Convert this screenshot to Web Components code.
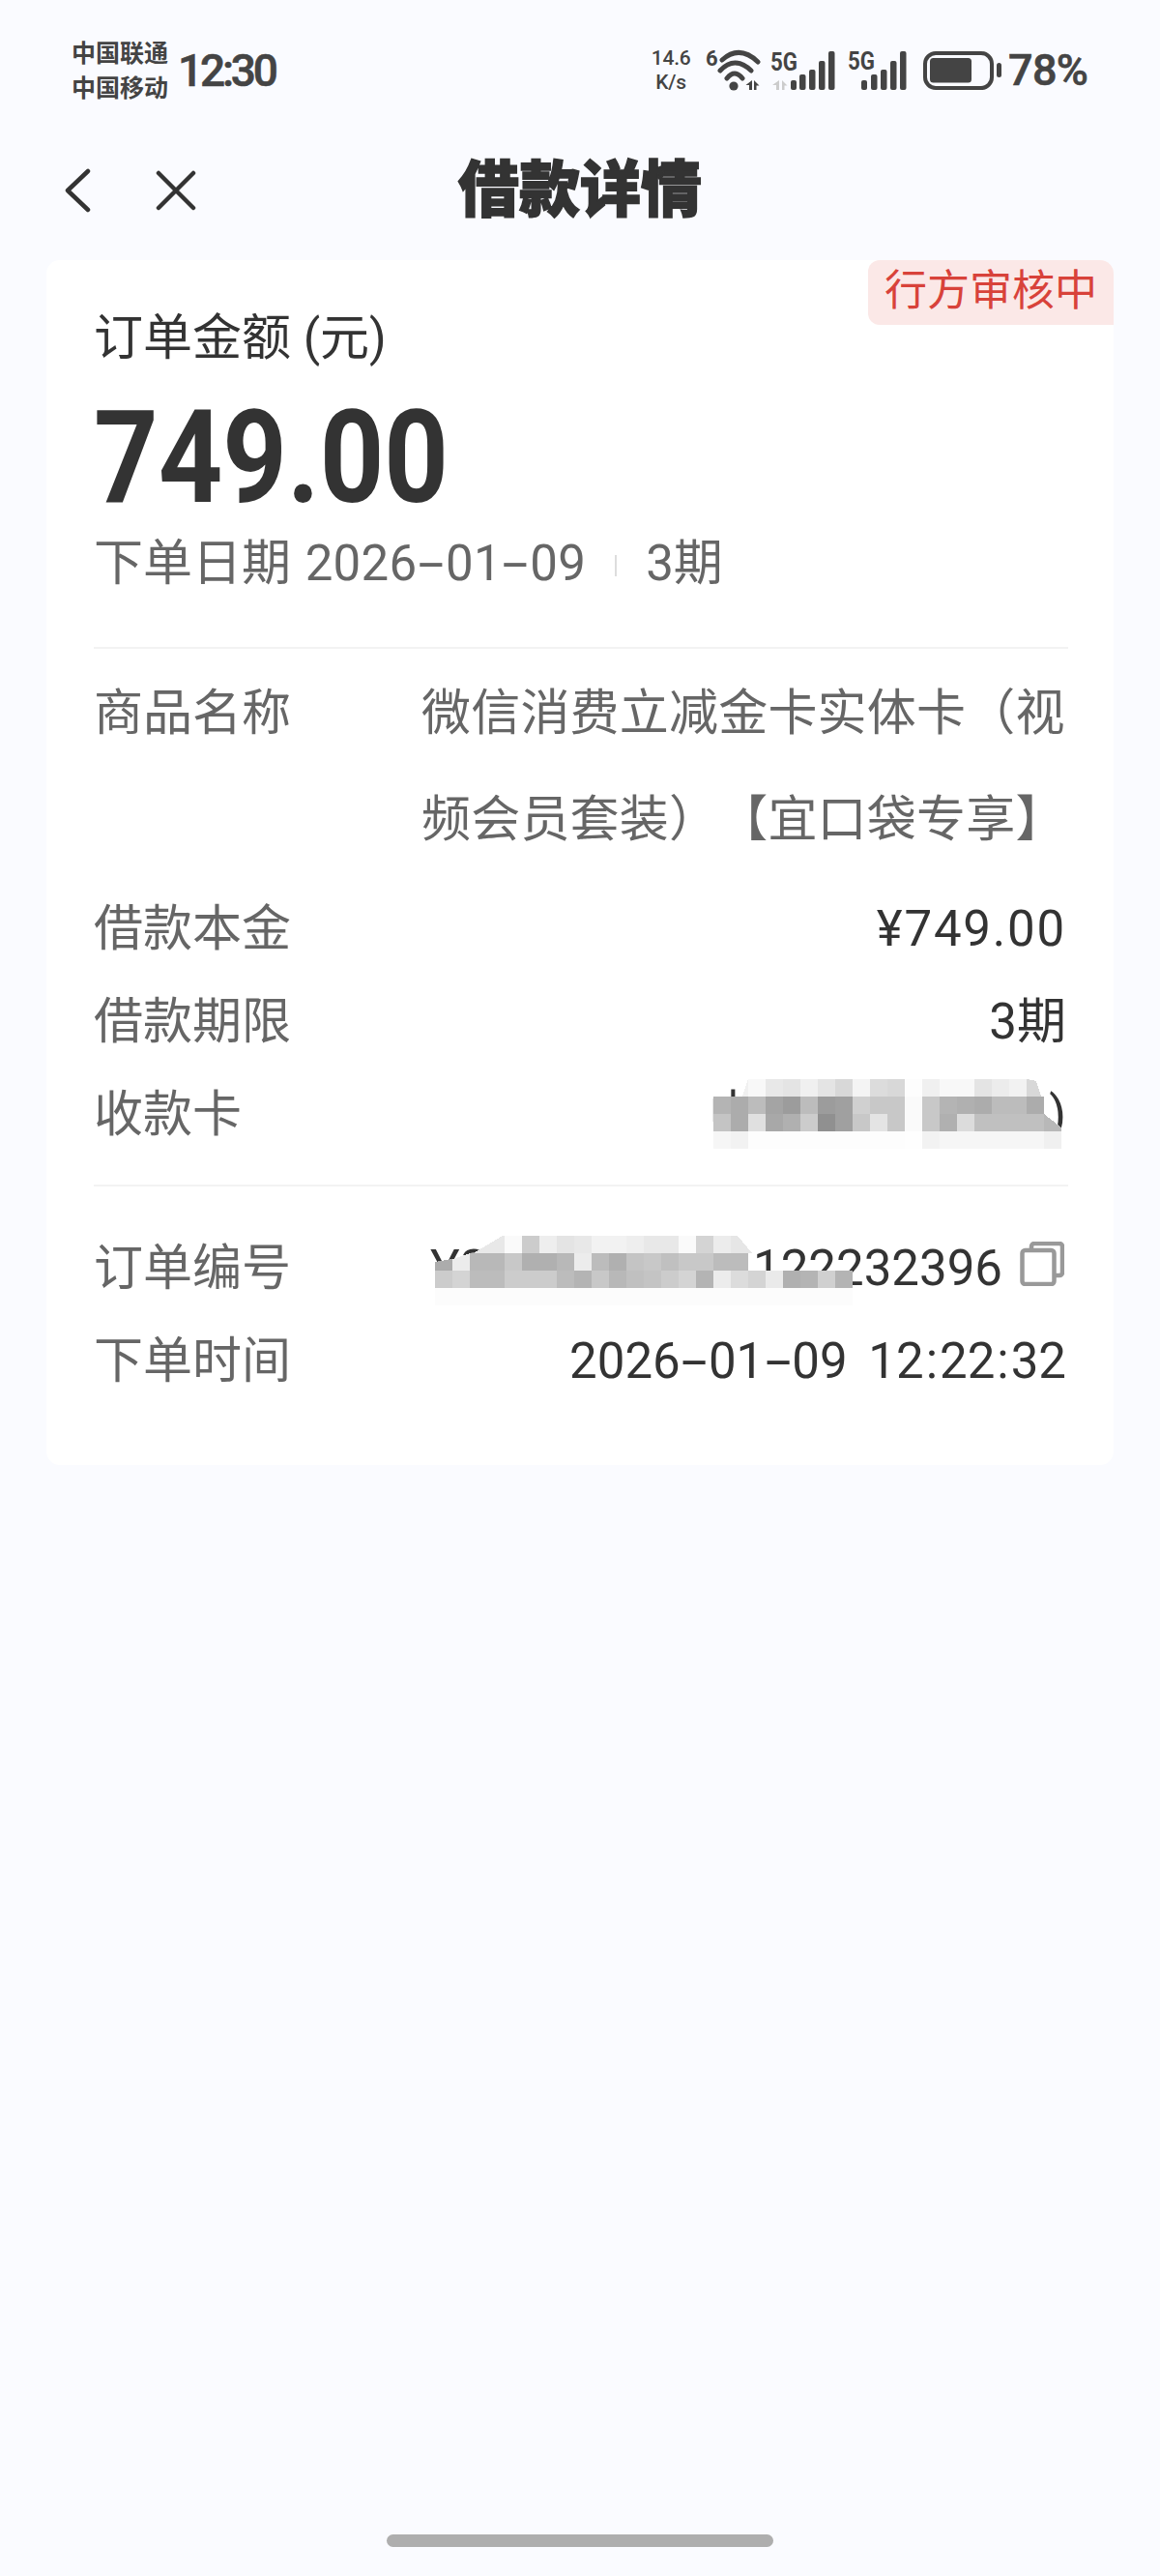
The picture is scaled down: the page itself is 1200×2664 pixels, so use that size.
<!DOCTYPE html>
<html lang="zh-CN">
<head>
<meta charset="utf-8">
<title>借款详情</title>
<style>
html,body{margin:0;padding:0;background:#fafbff;}
body{width:1200px;height:2664px;font-family:Roboto,"Noto Sans CJK SC",sans-serif;color:#333;}
x-app{display:block;}
</style>
</head>
<body>
<x-app></x-app>
<script>
const FONT='Roboto,"Noto Sans CJK SC",sans-serif';

class XStatusBar extends HTMLElement{
  constructor(){super();this.attachShadow({mode:'open'}).innerHTML=`
<style>
:host{display:flex;align-items:center;height:146px;padding:0 75px 0 74px;box-sizing:border-box;color:#444;font-family:${FONT};}
.car{display:flex;flex-direction:column;gap:11px;font-size:25px;line-height:25px;font-weight:700;width:100px;}
.time{margin-left:10px;font-size:46px;font-weight:500;letter-spacing:-3.2px;line-height:50px;-webkit-text-stroke:.6px #444;}
.right{margin-left:auto;display:flex;align-items:center;}
.sp{width:44px;font-size:21px;line-height:24.6px;font-weight:500;text-align:center;letter-spacing:-.2px;}
svg{display:block;margin-left:13px;}
svg text{font-family:${FONT};fill:#444;font-weight:700;}
.pct{margin-left:4px;font-size:45px;line-height:50px;font-weight:500;letter-spacing:-.8px;-webkit-text-stroke:.6px #444;}
</style>
<div class="car"><span>中国联通</span><span>中国移动</span></div>
<div class="time">12:30</div>
<div class="right">
  <div class="sp">14.6<br>K/s</div>
  <svg width="310" height="50" viewBox="730 48 310 50" fill="#444">
    <text x="731" y="68" font-size="22">6</text>
    <g fill="none" stroke="#444" stroke-width="5" stroke-linecap="round">
      <path d="M748 62Q766 46 785 64"/><path d="M746 73Q761 57 778 73"/><path d="M753 81Q761 71 769 81"/>
    </g>
    <circle cx="760" cy="89" r="4.6"/>
    <path d="M779 83v10h-3v-5h-3.500zM781 83l5.500 5.500h-3V93h-2.500z"/>
    <text x="798" y="72.500" font-size="26" textLength="28" lengthAdjust="spacingAndGlyphs">5G</text>
    <path d="M807 83v10h-3v-5h-4zM810 83l5.500 5.500h-3V93h-2.500z" fill="#ccc"/>
    <g>
      <rect x="819" y="83" width="6" height="10" rx="2"/><rect x="828" y="77" width="6.500" height="16" rx="2"/><rect x="838" y="72" width="6.500" height="21" rx="2"/><rect x="848" y="63" width="6.500" height="30" rx="2"/><rect x="858" y="53" width="6.500" height="40" rx="2"/>
    </g>
    <text x="878" y="71.500" font-size="25" textLength="28" lengthAdjust="spacingAndGlyphs">5G</text>
    <g>
      <rect x="892" y="83" width="6" height="10" rx="2"/><rect x="902" y="77" width="6.500" height="16" rx="2"/><rect x="912" y="72" width="6.500" height="21" rx="2"/><rect x="922" y="63" width="6.500" height="30" rx="2"/><rect x="932" y="53" width="6.500" height="40" rx="2"/>
    </g>
    <rect x="958" y="55" width="69" height="36" rx="11" fill="none" stroke="#444" stroke-width="4"/>
    <rect x="963" y="60" width="43" height="25.500" rx="3.500"/>
    <rect x="1032" y="65" width="5" height="15" rx="2.500"/>
  </svg>
  <div class="pct">78%</div>
</div>`;}
}

class XNavBar extends HTMLElement{
  constructor(){super();this.attachShadow({mode:'open'}).innerHTML=`
<style>
:host{display:grid;grid-template-columns:1fr auto 1fr;align-items:center;height:102px;margin-bottom:21px;box-sizing:border-box;color:#333;font-family:${FONT};}
.l{display:flex;align-items:center;gap:67px;padding-left:66px;}
svg{display:block;}
h1{margin:0;font-size:63px;line-height:80px;font-weight:900;letter-spacing:0;-webkit-text-stroke:1.500px #333;}
</style>
<div class="l">
<svg width="28" height="46" viewBox="0 0 28 46" fill="none" stroke="#333" stroke-width="4.500" stroke-linecap="round" stroke-linejoin="round"><path d="M25 3L4 23l21 20"/></svg>
<svg width="42" height="42" viewBox="0 0 42 42" fill="none" stroke="#333" stroke-width="4.500" stroke-linecap="round"><path d="M3 3l36 36M39 3L3 39"/></svg>
</div>
<h1>借款详情</h1>
<div></div>`;}
}

class XInfoRow extends HTMLElement{
  constructor(){super();this.attachShadow({mode:'open'}).innerHTML=`
<style>
:host{display:flex;position:relative;justify-content:space-between;font-size:51px;line-height:96px;color:#333;}
.l{color:#666;flex:none;white-space:nowrap;}
.v{display:flex;text-align:right;justify-content:flex-end;align-items:center;}
:host([long]){line-height:110px;}
:host([long]) .v{width:670px;flex:none;text-align:left;display:block;color:#666;margin-right:-1px;text-spacing-trim:space-all;letter-spacing:.2px;}
</style>
<div class="l"><slot name="label"></slot></div>
<div class="v"><slot></slot></div>`;}
}

class XMosaic extends HTMLElement{
  connectedCallback(){
    const s=18,rows=this.getAttribute('rows').trim().split('/').map(r=>r.trim().split(/\s+/));
    const w=Math.max(...rows.map(r=>r.length))*s,h=rows.length*s;
    let o='';
    rows.forEach((r,y)=>r.forEach((c,x)=>{if(c!=='--')o+=`<rect x="${x*s}" y="${y*s}" width="${s}" height="${s}" fill="#${c}${c}${c}"/>`;}));
    (this.getAttribute('polys')||'').split(';').filter(Boolean).forEach(p=>{const[a,c]=p.split('|');o+=`<polygon points="${a}" fill="#${c}${c}${c}"/>`;});
    this.attachShadow({mode:'open'}).innerHTML=`<style>:host{display:block;position:absolute;left:var(--x);top:var(--y);width:${w}px;height:${h}px;}svg{display:block;}</style><svg width="${w}" height="${h}" viewBox="0 0 ${w} ${h}" shape-rendering="crispEdges">${o}</svg>`;
  }
}

class XStatusTag extends HTMLElement{
  constructor(){super();this.attachShadow({mode:'open'}).innerHTML=`
<style>
:host{display:block;position:absolute;top:0;right:0;width:254px;height:67px;box-sizing:border-box;background:#fbe8e7;color:#d8423a;border-radius:12px 14px 0 12px;font-size:44px;line-height:64px;text-align:center;}
</style><slot></slot>`;}
}

class XOrderCard extends HTMLElement{
  constructor(){super();this.attachShadow({mode:'open'}).innerHTML=`
<style>
:host{display:block;position:relative;margin:0 48px;height:1246px;box-sizing:border-box;padding:51px 47px 0 49px;background:#fff;border-radius:14px;font-family:${FONT};color:#333;}
.t{font-size:51px;line-height:60px;color:#333;}
.amt{display:block;height:134px;margin-top:27px;font-size:134px;line-height:134px;font-weight:700;transform:scaleX(.867);transform-origin:0 0;white-space:nowrap;}
.date{display:flex;align-items:center;margin-top:12px;font-size:51px;line-height:60px;color:#666;white-space:nowrap;}
.date .n{margin-left:2px;letter-spacing:.3px;}
.sep{width:2px;height:22px;background:#ddd;margin:4px 30px 0 30px;}
.d{display:inline-block;transform:scaleX(1.9);margin:0 7.500px;}
.c{margin:0 2px;}
.w{margin-left:9px;}
hr{border:0;height:2px;background:#f3f3f3;margin:0;}
.h1{margin-top:56px;margin-bottom:12px;}
.h2{margin-top:24px;margin-bottom:37px;}
.gap{height:10px;}
.price{letter-spacing:1.800px;margin-right:2px;}
.qi{margin-right:2px;}
.card{width:370px;display:flex;justify-content:space-between;margin-right:2px;}
.mo{width:592px;display:flex;justify-content:space-between;}
.num{display:flex;align-items:center;margin-right:2px;}
.copy{display:block;flex:none;margin:-10px 4px 0 18px;}
x-mosaic{z-index:1;}
</style>
<x-status-tag>行方审核中</x-status-tag>
<div class="t">订单金额 (元)</div>
<div class="amt">749.00</div>
<div class="date"><span>下单日期 <span class="n">2026<span class="d">-</span>01<span class="d">-</span>09</span></span><span class="sep"></span><span>3期</span></div>
<hr class="h1">
<x-info-row long><span slot="label">商品名称</span>微信消费立减金卡实体卡（视频会员套装）【宜口袋专享】</x-info-row>
<div class="gap"></div>
<x-info-row><span slot="label">借款本金</span><span class="price">¥749.00</span></x-info-row>
<x-info-row><span slot="label">借款期限</span><span class="qi">3期</span></x-info-row>
<x-info-row><span slot="label">收款卡</span><span class="card"><span>中</span><span>)</span></span>
  <x-mosaic style="--x:641px;--y:11px" rows="-- -- f8 e8 e4 f0 e4 d8 f4 dc d8 fd f0 f8 f8 e4 ec f2 -- --/b4 ac bc a4 9c bc 9c a0 d0 c8 c8 fa c8 b4 b0 ac bc bc ac --/c4 ac e0 a8 b0 cc 90 a0 c8 e4 c8 fa c8 b0 dc c0 c0 c0 c0 --/f6 f2 fd fd fd fd fd fd fd fd fd fe f2 f6 f6 f6 f6 f6 f6 f0" polys="30,18 36,0 36,18|f0;324,0 334,2 339,18 324,18|d8;342,36 360,50 360,54 342,54|b8"></x-mosaic>
</x-info-row>
<hr class="h2">
<x-info-row><span slot="label">订单编号</span><span class="mo"><span>Y2</span><span>122232396</span></span>
  <svg class="copy" width="46" height="46" viewBox="0 0 46 46" fill="none" stroke="#999" stroke-width="4.500" stroke-linejoin="round"><path d="M12 7V5a3 3 0 0 1 3-3h26a3 3 0 0 1 3 3v27a3 3 0 0 1-3 3h-5"/><rect x="2.500" y="9" width="33" height="35" rx="3"/></svg>
  <x-mosaic style="--x:353px;--y:14px" rows="-- -- -- -- fa cc ee e4 e8 f2 f2 ee e8 e8 fa d4 ec --/-- -- b8 b8 c8 b0 b0 b8 ec bc b0 c4 c8 c0 c8 c8 bc bc/cc d4 bc bc cc cc cc bc b4 c8 b8 c0 c4 cc d4 b4 ec dc d4 ea b0 b4 d0 b4/fc fc fc fc fc fc fc fc fc fc fc fc fc fc fc fc fc fc fc fc fc fc fc fc" polys="40,18 70,0 72,0 72,18|e8;306,0 313,0 328,18 306,18|e6;0,27 18,24 18,36 0,36|ac;18,24 36,18 36,36 18,36|ec"></x-mosaic>
</x-info-row>
<x-info-row><span slot="label">下单时间</span><span class="num"><span>2026<span class="d">-</span>01<span class="d">-</span>09 <span class="w">12</span><span class="c">:</span>22<span class="c">:</span>32</span></span></x-info-row>`;}
}

class XHomeIndicator extends HTMLElement{
  constructor(){super();this.attachShadow({mode:'open'}).innerHTML=`
<style>:host{display:block;width:400px;height:13px;border-radius:7px;background:#aeaeae;margin:1106px auto 0;}</style>`;}
}

class XApp extends HTMLElement{
  constructor(){super();this.attachShadow({mode:'open'}).innerHTML=`
<style>:host{display:block;width:1200px;height:2664px;overflow:hidden;}</style>
<x-status-bar></x-status-bar>
<x-nav-bar></x-nav-bar>
<x-order-card></x-order-card>
<x-home-indicator></x-home-indicator>`;}
}
customElements.define('x-status-bar',XStatusBar);
customElements.define('x-nav-bar',XNavBar);
customElements.define('x-info-row',XInfoRow);
customElements.define('x-mosaic',XMosaic);
customElements.define('x-status-tag',XStatusTag);
customElements.define('x-order-card',XOrderCard);
customElements.define('x-home-indicator',XHomeIndicator);
customElements.define('x-app',XApp);
</script>
</body>
</html>
